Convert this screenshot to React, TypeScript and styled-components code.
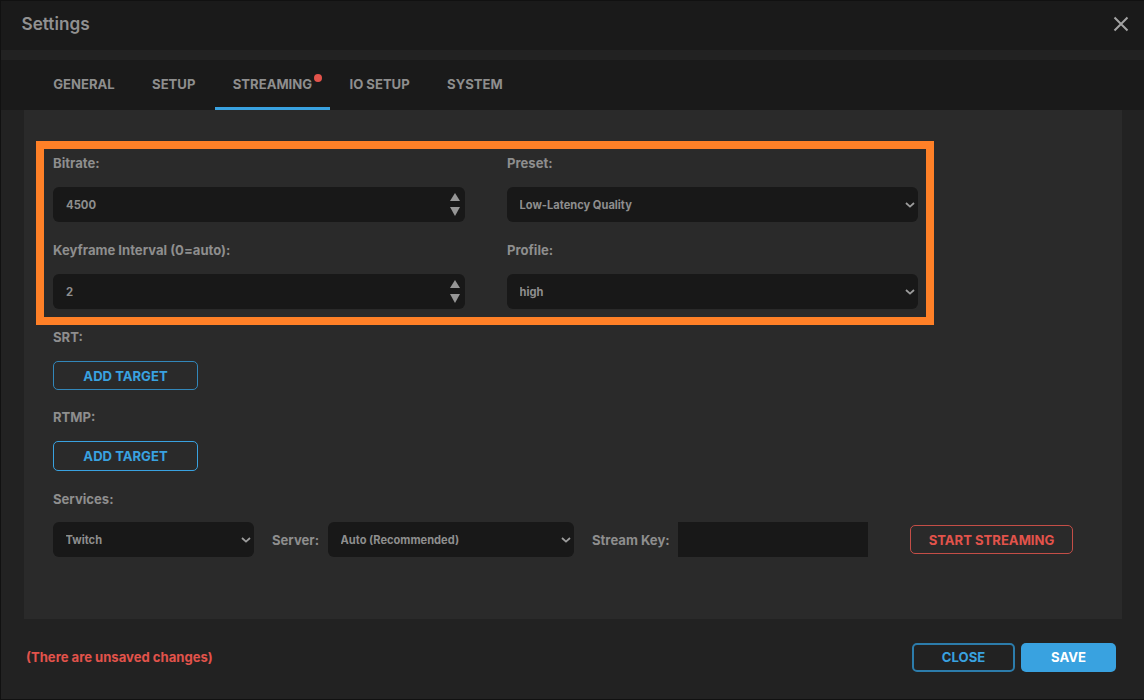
import React from "react";
import styled, { createGlobalStyle } from "styled-components";

const GlobalStyle = createGlobalStyle`
  html, body {
    margin: 0;
    padding: 0;
    background: #222222;
  }
  body {
    font-family: Inter, "Liberation Sans", sans-serif;
    color: #8e8e8e;
  }
  * {
    box-sizing: border-box;
  }
`;

const Page = styled.div`
  width: 1144px;
  height: 700px;
  display: flex;
  flex-direction: column;
  background: #222222;
  border: 1px solid #111111;
  border-right: none;
  overflow: hidden;
`;

const Header = styled.header`
  height: 49px;
  flex: none;
  display: flex;
  align-items: center;
  justify-content: space-between;
  padding: 0 15px 3px 20.5px;
  background: #1a1a1a;
`;

const Title = styled.h1`
  margin: 0;
  font-size: 17.2px;
  line-height: 20px;
  font-weight: 600;
  color: #919191;
`;

const CloseIcon = styled.button`
  width: 16px;
  height: 16px;
  padding: 0;
  border: none;
  background: none;
  color: #a3a3a3;
  display: flex;
`;

const TabBar = styled.nav`
  height: 50px;
  flex: none;
  margin-top: 10px;
  padding-left: 34px;
  display: flex;
  background: #1a1a1a;
`;

const Tab = styled.div<{ $active?: boolean }>`
  position: relative;
  display: flex;
  align-items: center;
  height: 50px;
  padding: 1px 18.2px 1px;
  margin-right: 1px;
  font-size: 13.1px;
  font-weight: 700;
  white-space: nowrap;
  color: #8e8e8e;
  border-bottom: 3px solid ${(p) => (p.$active ? "#39a2e0" : "transparent")};
`;

const Dot = styled.span`
  position: absolute;
  top: 14px;
  right: 8px;
  width: 8px;
  height: 8px;
  border-radius: 50%;
  background: #e2534b;
`;

const Panel = styled.main`
  height: 509px;
  flex: none;
  width: 1098px;
  margin-left: 23px;
  padding: 31px 12px 0;
  background: #2a2a2a;
`;

const Highlight = styled.section`
  width: 898px;
  height: 184px;
  border: 8px solid #ff8027;
  padding: 0 8px 0 9px;
  display: grid;
  grid-template-columns: 412px 411px;
  column-gap: 42px;
  align-content: start;
`;

const Field = styled.div`
  display: flex;
  flex-direction: column;
  height: 87px;
`;

const Label = styled.label`
  display: block;
  height: 38px;
  padding-top: 6px;
  font-size: 13.1px;
  line-height: 16px;
  font-weight: 700;
  color: #8e8e8e;
`;

const NumberBox = styled.div`
  height: 35px;
  display: flex;
  align-items: center;
  padding: 0 3px 0 13px;
  background: #181818;
  border-radius: 6px;
`;

const NumberText = styled.input`
  flex: 1;
  min-width: 0;
  border: none;
  outline: none;
  padding: 0;
  background: none;
  font: 700 11.3px Inter, "Liberation Sans", sans-serif;
  color: #8e8e8e;
`;

const Spinner = styled.div`
  width: 14px;
  display: flex;
  flex-direction: column;
  align-items: center;
  gap: 6px;
  color: #969696;
`;

const SelectWrap = styled.div<{ $width?: number }>`
  position: relative;
  flex: none;
  width: ${(p) => (p.$width ? `${p.$width}px` : "100%")};
  height: 35px;
  color: #9c9c9c;

  svg {
    position: absolute;
    top: 15px;
    right: 3.5px;
    pointer-events: none;
  }
`;

const SelectBox = styled.select`
  display: block;
  appearance: none;
  width: 100%;
  height: 35px;
  padding: 0 16px 0 12.5px;
  border: none;
  outline: none;
  border-radius: 6px;
  background-color: #181818;
  color: #8e8e8e;
  font: 700 11.1px Inter, "Liberation Sans", sans-serif;
`;

const Section = styled.div`
  height: 80px;
  padding-left: 17px;
`;

const SectionLabel = styled(Label)<{ $top: number; $height: number }>`
  height: ${(p) => p.$height}px;
  padding-top: ${(p) => p.$top}px;
`;

const OutlineButton = styled.button<{ $color: string; $border?: string; $width: number; $height?: number; $strong?: boolean }>`
  width: ${(p) => p.$width}px;
  height: ${(p) => p.$height ?? 28}px;
  flex: none;
  padding: 0;
  background: transparent;
  border: ${(p) => (p.$strong ? 2 : 1)}px solid ${(p) => p.$border ?? p.$color};
  border-radius: 5px;
  color: ${(p) => p.$color};
  font: 700 13.1px Inter, "Liberation Sans", sans-serif;
`;

const ServicesRow = styled.div`
  display: flex;
  align-items: center;
`;

const InlineLabel = styled.span<{ $left: number; $width: number }>`
  width: ${(p) => p.$width}px;
  flex: none;
  margin-left: ${(p) => p.$left}px;
  font-size: 13.1px;
  font-weight: 700;
  white-space: nowrap;
  color: #8e8e8e;
`;

const KeyInput = styled.input`
  width: 190px;
  height: 35px;
  flex: none;
  margin-right: 42px;
  border: none;
  outline: none;
  background: #181818;
`;

const Footer = styled.footer`
  flex: 1;
  display: flex;
  align-items: center;
  justify-content: space-between;
  padding: 0 28px 4px 25px;
`;

const Unsaved = styled.span`
  font-size: 13.1px;
  font-weight: 700;
  color: #e2534b;
`;

const FooterActions = styled.div`
  display: flex;
  gap: 6px;
`;

const SaveButton = styled.button`
  width: 95px;
  height: 29px;
  padding: 0;
  border: none;
  border-radius: 5px;
  background: #39a2e0;
  color: #ffffff;
  font: 700 13.1px Inter, "Liberation Sans", sans-serif;
`;

const Arrows = () => (
  <Spinner>
    <svg width="10" height="8" viewBox="0 0 10 8" fill="currentColor">
      <path d="M5 0 10 8H0z" />
    </svg>
    <svg width="10" height="9" viewBox="0 0 10 9" fill="currentColor">
      <path d="M0 0h10L5 9z" />
    </svg>
  </Spinner>
);

const Select = ({ value, width }: { value: string; width?: number }) => (
  <SelectWrap $width={width}>
    <SelectBox defaultValue={value}>
      <option>{value}</option>
    </SelectBox>
    <svg width="10" height="6" viewBox="0 0 10 6" fill="none" stroke="currentColor" strokeWidth="1.8">
      <path d="M1 1 5 4.6 9 1" />
    </svg>
  </SelectWrap>
);

const tabs = ["GENERAL", "SETUP", "STREAMING", "IO SETUP", "SYSTEM"];

export default function App() {
  return (
    <Page>
      <GlobalStyle />
      <Header>
        <Title>Settings</Title>
        <CloseIcon aria-label="Close">
          <svg width="16" height="16" viewBox="0 0 16 16" fill="none" stroke="currentColor" strokeWidth="2">
            <path d="M1.5 1.5 14.5 14.5M14.5 1.5 1.5 14.5" />
          </svg>
        </CloseIcon>
      </Header>

      <TabBar>
        {tabs.map((t) => (
          <Tab key={t} $active={t === "STREAMING"}>
            {t}
            {t === "STREAMING" && <Dot />}
          </Tab>
        ))}
      </TabBar>

      <Panel>
        <Highlight>
          <Field>
            <Label>Bitrate:</Label>
            <NumberBox>
              <NumberText defaultValue="4500" />
              <Arrows />
            </NumberBox>
          </Field>
          <Field>
            <Label>Preset:</Label>
            <Select value="Low-Latency Quality" />
          </Field>
          <Field>
            <Label>Keyframe Interval (0=auto):</Label>
            <NumberBox>
              <NumberText defaultValue="2" />
              <Arrows />
            </NumberBox>
          </Field>
          <Field>
            <Label>Profile:</Label>
            <Select value="high" />
          </Field>
        </Highlight>

        <Section>
          <SectionLabel $top={4} $height={36}>SRT:</SectionLabel>
          <OutlineButton $color="#39a2e0" $border="#3287ba" $width={145} $height={29}>ADD TARGET</OutlineButton>
        </Section>
        <Section>
          <SectionLabel $top={4} $height={36}>RTMP:</SectionLabel>
          <OutlineButton $color="#39a2e0" $width={145} $height={30}>ADD TARGET</OutlineButton>
        </Section>
        <Section>
          <SectionLabel $top={6} $height={37}>Services:</SectionLabel>
          <ServicesRow>
            <Select width={201} value="Twitch" />
            <InlineLabel $left={18} $width={56}>Server:</InlineLabel>
            <Select width={246} value="Auto (Recommended)" />
            <InlineLabel $left={18} $width={86}>Stream Key:</InlineLabel>
            <KeyInput />
            <OutlineButton $color="#e2534b" $border="#c44e47" $width={163} $height={29}>START STREAMING</OutlineButton>
          </ServicesRow>
        </Section>
      </Panel>

      <Footer>
        <Unsaved>(There are unsaved changes)</Unsaved>
        <FooterActions>
          <OutlineButton $color="#39a2e0" $border="#2c7cab" $width={103} $height={29} $strong>CLOSE</OutlineButton>
          <SaveButton>SAVE</SaveButton>
        </FooterActions>
      </Footer>
    </Page>
  );
}
